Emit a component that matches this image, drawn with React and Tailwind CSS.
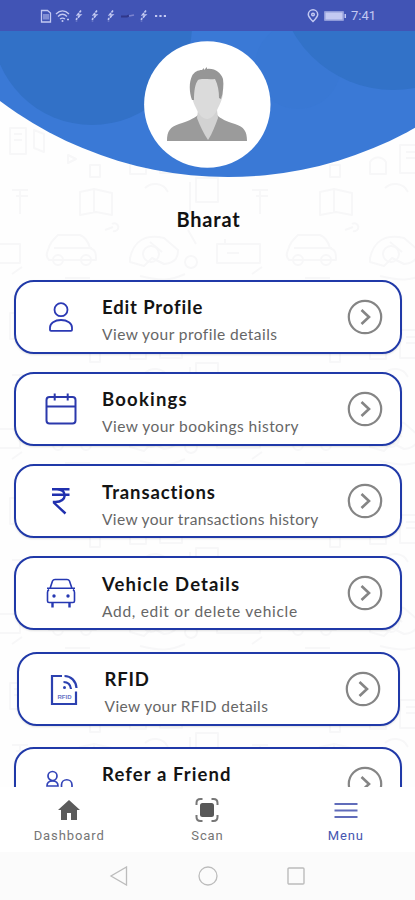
import { clsx } from 'clsx'

function StatusBar() {
  return (
    <div className="flex h-[31px] shrink-0 items-center justify-between bg-[#4154b5] pr-[39px] pl-[40px] text-[#c3c9f2]">
      <svg width="130" height="16" viewBox="0 0 130 16" fill="none" stroke="currentColor" strokeWidth="1.3">
        <path d="M1.500 2.500h6l3 2.500v9h-9z" />
        <path d="M4 6v5.500M6 6v5.500M8 6v5.500" strokeWidth="1" />
        <path d="M16 6c4-4 9-4 13 0M18 8.500c3-3 6-3 9 0M20 11c2-1.500 3-1.500 5 0" />
        <circle cx="22.500" cy="13" r="1" fill="currentColor" stroke="none" />
        <path d="M27 11.500h2" />
        {[36, 52, 68, 101].map((x) => (
          <path key={x} d={`M${x + 5} 2.500l-3.500 4.500h3l-4 4v2.500`} strokeWidth="1.600" strokeDasharray="2.500 .8" />
        ))}
        <path d="M81 8.500h6l2-1" stroke="#30378a" strokeWidth="2" />
        <path d="M89 8l5-1" stroke="#7b83cf" strokeWidth="1.600" />
        <path d="M115 8h12" strokeWidth="2" strokeDasharray="2.200 2.200" />
      </svg>
      <div className="flex items-center">
        <svg width="12" height="14" viewBox="0 0 12 14" fill="none" stroke="currentColor" strokeWidth="1.500">
          <path d="M6 12.500C3 9.500 1.300 7.500 1.300 5.500a4.700 4.700 0 0 1 9.400 0c0 2-1.700 4-4.700 7z" />
          <circle cx="6" cy="5.500" r="1.300" />
        </svg>
        <svg className="ml-[5px]" width="22" height="10" viewBox="0 0 22 10" fill="currentColor">
          <rect width="20" height="10" rx="1" opacity=".6" />
          <rect x="1.500" y="1.500" width="17" height="7" />
          <rect x="20.500" y="3" width="1.500" height="4" />
        </svg>
        <span className="ml-[5px] font-[Roboto] text-[13px] leading-4">7:41</span>
      </div>
    </div>
  )
}

function Doodles() {
  return (
    <svg className="absolute inset-0 h-full w-full" fill="none" aria-hidden="true">
      <defs>
        <pattern id="doodles" width="240" height="185" patternUnits="userSpaceOnUse" patternTransform="translate(0 69)">
          <g stroke="#f7f7f8" strokeWidth="2" strokeLinejoin="round">
            <path d="M10 28h16v26H10zM14 34h8M14 40h8M34 30l10 4v18l-10-4z" />
            <path d="M80 92l14-3 18 4v22l-16-3-16 3zM94 89v23M12 90h16M16 96h12M20 90v24" />
            <path d="M48 150c2-7 4-9 10-15h22c5 2 8 6 10 13 6 2 6 6 6 12H49c-3-3-3-6-1-10zM54 148h38" />
            <circle cx="58" cy="160" r="5" />
            <circle cx="86" cy="160" r="5" />
            <path d="M130 158c4-18 16-24 34-20l14 12c0 9-4 13-14 14l-12-6-8 8-14-4zM150 142l12 10" />
            <circle cx="151" cy="154" r="8" />
            <path d="M217 144h43v19h-43zM-23 144h43v19h-43zM225 139v5M227 153h12" />
            <path d="M68 55l8 4-8 4zM90 65h10v12H90zM130 62c4-6 12-6 16 0v12h-16z" />
            <path d="M160 45h22v28h-22zM166 52h10M166 58h10M200 30l6 16h-10l5 14M196 78h22v24h-22z" />
            <path d="M145 88c6-6 18-6 23 4M188 130l8 14M190 82v32M105 130l8-3M112 124a4 4 0 1 1 1 7" />
            <circle cx="191" cy="162" r="6" />
            <path d="M12 174l10-7M65 178h25M140 176c20 5 30 5 45-2" />
          </g>
        </pattern>
      </defs>
      <rect width="100%" height="100%" fill="url(#doodles)" />
    </svg>
  )
}

function Header() {
  return (
    <svg className="relative block shrink-0" width="415" height="149" viewBox="0 31 415 149">
      <defs>
        <clipPath id="dome">
          <circle cx="228" cy="-203" r="380" />
        </clipPath>
      </defs>
      <g clipPath="url(#dome)">
        <rect y="31" width="415" height="149" fill="#3a79d6" />
        <circle cx="92" cy="25" r="100" fill="#3271c7" />
        <circle cx="298" cy="66" r="43" fill="#3978d4" />
        <circle cx="393" cy="-25" r="115" fill="#3272c8" />
      </g>
      <circle cx="207.300" cy="104.500" r="63.200" fill="#fff" />
      <path d="M167 141c0-10 3-14 12-17 9-3 14-5 19-9h19c4 4 9 6 18 9 9 3 12 7 12 17z" fill="#9b9b9b" />
      <path d="M198 110l-1 8c3 8 7 16 11 22 4-6 7-14 10-22l-1-8z" fill="#d2d2d2" />
      <path d="M193 83c1-7 6-11 14-11s14 4 15 11l1 11c-1 6-3 10-5 14-3 7-7 11-11 11s-8-4-11-11c-2-4-4-8-4-14z" fill="#dbdbdb" />
      <path d="M192 100c-3-8-3-18 0-24 2-4 6-6 10-6l2-2v2l3-3v2c8-1 14 4 16 10 1 6 0 14-2 20l-2-1c0-7-1-13-4-19-6 1-13-1-17 1-3 4-4 11-4 20z" fill="#969696" />
    </svg>
  )
}

function UserIcon() {
  return (
    <svg width="32" height="34" viewBox="0 0 32 34" fill="none" stroke="#2b39b4" strokeWidth="1.800">
      <circle cx="16" cy="9.700" r="6.500" />
      <path d="M5 30v-2.500C5 23.500 9.500 20 16 20s11 3.500 11 7.500V30q0 .8-1 .8H6q-1 0-1-.8z" />
    </svg>
  )
}

function CalendarIcon() {
  return (
    <svg width="32" height="34" viewBox="0 0 32 34" fill="none" stroke="#2b39ac" strokeWidth="2">
      <rect x="1.500" y="5" width="29" height="26.500" rx="3" />
      <path d="M1.500 14.500h29M9.700 1.500v7M22.700 1.500v7" />
    </svg>
  )
}

function RupeeIcon() {
  return (
    <svg width="32" height="34" viewBox="0 0 32 34" fill="none" stroke="#2030ae" strokeWidth="2.400">
      <path d="M7 5.200h17.500M7 10.800h17.500M12 5.200c10.500 0 10.500 12.800-1.500 12.800H9v.8L20.500 29.500" />
    </svg>
  )
}

function CarIcon() {
  return (
    <svg width="32" height="34" viewBox="0 0 32 34" fill="none" stroke="#2638b2" strokeWidth="1.600">
      <path d="M5 12.500L7.500 5q.7-1.500 2.500-1.500h12q1.800 0 2.500 1.500L27 12.500M2 12.300h28M4 13.500q-1.500 1-1.500 3V25q0 1.500 1.500 1.500h24q1.500 0 1.500-1.500v-8.500q0-2-1.500-3" />
      <path d="M7.500 26.500v5M24.500 26.500v5" strokeWidth="2.400" />
      <circle cx="9" cy="20" r="1.700" fill="#2638b2" stroke="none" />
      <circle cx="23" cy="20" r="1.700" fill="#2638b2" stroke="none" />
    </svg>
  )
}

function RfidIcon() {
  return (
    <svg width="32" height="34" viewBox="0 0 32 34" fill="none" stroke="#2c41b0" strokeWidth="2.200">
      <path d="M14 4H4v28h24V19.500" />
      <path d="M16.500 4C23 4 28 9 28.500 16M15.500 10c4 0 7 2.500 7.500 7" />
      <circle cx="16.500" cy="15.500" r="1.500" fill="#2c41b0" stroke="none" />
      <text x="9.500" y="26.500" fill="#6672c4" stroke="none" fontSize="6" fontFamily="Liberation Sans" fontWeight="700" textLength="14" lengthAdjust="spacingAndGlyphs">RFID</text>
    </svg>
  )
}

function FriendsIcon() {
  return (
    <svg width="32" height="34" viewBox="0 0 32 34" fill="none" stroke="#3344b8" strokeWidth="1.700">
      <circle cx="7.500" cy="9" r="4.500" />
      <path d="M2 19c0-3.500 2-5 5.500-5s5.500 1.500 5.500 5zM16.500 23v-5c0-7 10.500-7 10.500 0v5" />
    </svg>
  )
}

const menuItems = [
  { title: 'Edit Profile', text: 'View your profile details', icon: UserIcon, titleClass: 'tracking-[0.85px]', textClass: 'tracking-[0.46px]' },
  { title: 'Bookings', text: 'View your bookings history', icon: CalendarIcon, titleClass: 'tracking-[1.2px]', textClass: 'tracking-[0.48px]' },
  { title: 'Transactions', text: 'View your transactions history', icon: RupeeIcon, titleClass: 'tracking-[0.9px]', textClass: 'tracking-[0.36px]' },
  { title: 'Vehicle Details', text: 'Add, edit or delete vehicle', icon: CarIcon, titleClass: 'tracking-[1.1px]', textClass: 'tracking-[0.7px]' },
  { title: 'RFID', text: 'View your RFID details', icon: RfidIcon, titleClass: 'tracking-[0.8px]', textClass: 'tracking-[0.4px]', inset: true },
  { title: 'Refer a Friend', icon: FriendsIcon, titleClass: 'tracking-[1.1px]' },
]

function MenuCard({ title, text, icon: Icon, titleClass, textClass, inset }) {
  return (
    <button
      className={clsx(
        'flex h-[74px] shrink-0 items-center rounded-[20px] border-[2.5px] border-[#2039a8] bg-white pr-[17px] pl-[29px] text-left shadow-[0_1px_2px_rgba(0,0,0,0.12)]',
        inset ? 'mx-[2.5px] my-[3px]' : 'mx-0',
      )}
    >
      <Icon />
      <span className="ml-[25px] h-[43px] flex-1 whitespace-nowrap">
        <span className={clsx('block text-[18.5px] leading-6 font-bold text-[#141414]', titleClass)}>{title}</span>
        {text ? <span className={clsx('mt-[5px] block text-[15.5px] leading-5 text-[#666]', textClass)}>{text}</span> : null}
      </span>
      <svg width="36" height="36" viewBox="0 0 36 36" fill="none" stroke="#858585" strokeWidth="2.200">
        <circle cx="18" cy="18" r="16.200" />
        <path d="M14.500 11l7.500 7-7.500 7" strokeWidth="2.600" />
      </svg>
    </button>
  )
}

function BottomNav() {
  return (
    <nav className="relative grid h-[65px] shrink-0 grid-cols-3 bg-white font-[Roboto] text-[13px] leading-4 tracking-[0.9px] text-[#757575]">
      <div className="flex flex-col items-center pt-[10px]">
        <svg width="24" height="26" viewBox="0 0 24 26" fill="#5b5b5b">
          <path d="M12 3L1 13h3v10h6v-7h4v7h6V13h3z" />
        </svg>
        <span className="mt-[5px]">Dashboard</span>
      </div>
      <div className="flex flex-col items-center pt-[10px]">
        <svg width="24" height="26" viewBox="0 0 24 26" fill="none" stroke="#777" strokeWidth="2">
          <path d="M1.500 8V6q0-4 4-4h2M16.500 2h2q4 0 4 4v2M22.500 18v2q0 4-4 4h-2M7.500 24h-2q-4 0-4-4v-2" />
          <rect x="5" y="6" width="14" height="14" rx="2.500" fill="#585858" stroke="none" />
        </svg>
        <span className="mt-[5px]">Scan</span>
      </div>
      <div className="flex flex-col items-center pt-[10px] text-[#4556b0]">
        <svg width="24" height="26" viewBox="0 0 24 26" fill="none" stroke="#606cba" strokeWidth="2.200">
          <path d="M.5 7h23M.5 13.500h23M.5 20h23" />
        </svg>
        <span className="mt-[5px]">Menu</span>
      </div>
    </nav>
  )
}

function SystemNav() {
  return (
    <div className="relative flex h-12 shrink-0 items-center justify-between bg-[#fbfbfb] pr-[109px] pl-[109px]">
      <svg width="20" height="20" viewBox="0 0 20 20" fill="none" stroke="#bcbcbc" strokeWidth="1.300">
        <path d="M17.500 1v18L2 10z" />
      </svg>
      <svg width="20" height="20" viewBox="0 0 20 20" fill="none" stroke="#bcbcbc" strokeWidth="1.300">
        <circle cx="10" cy="10" r="9" />
      </svg>
      <svg width="20" height="20" viewBox="0 0 20 20" fill="none" stroke="#bcbcbc" strokeWidth="1.400">
        <rect x="2" y="2" width="16" height="16" rx="1" />
      </svg>
    </div>
  )
}

export default function App() {
  return (
    <div className="flex h-[900px] w-[415px] flex-col overflow-hidden bg-[#fefefe] font-[Lato,sans-serif]">
      <StatusBar />
      <main className="relative flex min-h-0 flex-1 flex-col overflow-hidden">
        <Doodles />
        <Header />
        <h1 className="relative mt-[27px] h-6 shrink-0 pl-[2px] text-center text-[20px] leading-6 font-bold tracking-[0.8px] text-[#111]">Bharat</h1>
        <section className="relative mt-[48.5px] flex flex-col gap-[18.3px] pr-[13px] pl-[14px]">
          {menuItems.map((item) => (
            <MenuCard key={item.title} {...item} />
          ))}
        </section>
      </main>
      <BottomNav />
      <SystemNav />
    </div>
  )
}
